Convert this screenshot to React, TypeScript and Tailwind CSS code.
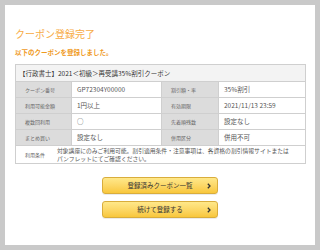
import React from "react";

const jp = { fontFamily: '"Noto Sans CJK JP", "Noto Sans", sans-serif' };

function Label({ children }: { children: React.ReactNode }) {
  return (
    <td className="border border-[#cfcfcf] bg-[#dcdcdc] pl-[9px] text-[5px] leading-none text-[#666] h-[16px]">
      {children}
    </td>
  );
}

function Value({ children }: { children: React.ReactNode }) {
  return (
    <td className="border border-[#cfcfcf] bg-white pl-[5px] text-[6.5px] leading-none text-[#555] h-[16px]">
      {children}
    </td>
  );
}

function Btn({ children }: { children: React.ReactNode }) {
  return (
    <div className="relative w-[116px] h-[17px] rounded-[3px] border border-[#d9ad3c] bg-gradient-to-b from-[#ffe88a] to-[#f8c73a] flex items-center justify-center shadow-[0_1px_0_rgba(0,0,0,0.08)]">
      <span className="text-[6.5px] leading-none text-[#333]">{children}</span>
      <svg className="absolute right-[6px] top-[5px]" width="4" height="6" viewBox="0 0 4 6">
        <polyline points="0.8,0.8 3,3 0.8,5.2" fill="none" stroke="#333" strokeWidth="1.3" />
      </svg>
    </div>
  );
}

export default function App() {
  return (
    <div className="w-[320px] h-[250px] bg-[#c9c9c9] p-[5px]" style={jp}>
      <div className="w-[310px] h-[240px] bg-white flex flex-col px-[10px] pt-[22px]">
        <div className="text-[10px] leading-[14px] text-[#f7ab45]">クーポン登録完了</div>
        <div className="mt-[6px] text-[6.5px] leading-[10px] font-bold text-[#ef9a1e]">以下のクーポンを登録しました。</div>
        <table className="mt-[7px] w-[290px] border-collapse table-fixed">
          <colgroup>
            <col className="w-[56px]" />
            <col className="w-[90px]" />
            <col className="w-[57px]" />
            <col className="w-[87px]" />
          </colgroup>
          <tbody>
            <tr>
              <td colSpan={4} className="border border-[#cfcfcf] bg-[#f3f3f3] h-[17px] pl-[3px] text-[6.5px] leading-none text-[#333]">
                【行政書士】2021＜初級＞再受講35%割引クーポン
              </td>
            </tr>
            <tr>
              <Label>クーポン番号</Label>
              <Value>GP72304Y00000</Value>
              <Label>割引額・率</Label>
              <Value>35%割引</Value>
            </tr>
            <tr>
              <Label>利用可能金額</Label>
              <Value>1円以上</Value>
              <Label>有効期限</Label>
              <Value>2021/11/13 23:59</Value>
            </tr>
            <tr>
              <Label>複数回利用</Label>
              <Value>○</Value>
              <Label>先着順残数</Label>
              <Value>設定なし</Value>
            </tr>
            <tr>
              <Label>まとめ買い</Label>
              <Value>設定なし</Value>
              <Label>併用区分</Label>
              <Value>併用不可</Value>
            </tr>
            <tr>
              <td colSpan={4} className="border border-[#cfcfcf] bg-white h-[18px]">
                <div className="flex items-center">
                  <div className="w-[41px] shrink-0 pl-[9px] text-[5px] leading-none text-[#666]">利用条件</div>
                  <div className="text-[5.8px] leading-[8px] text-[#555]">
                    対象講座にのみご利用可能。割引適用条件・注意事項は、各資格の割引情報サイトまたは
                    <br />
                    パンフレットにてご確認ください。
                  </div>
                </div>
              </td>
            </tr>
          </tbody>
        </table>
        <div className="mt-[13px] flex flex-col items-center gap-[7px]">
          <Btn>登録済みクーポン一覧</Btn>
          <Btn>続けて登録する</Btn>
        </div>
      </div>
    </div>
  );
}
